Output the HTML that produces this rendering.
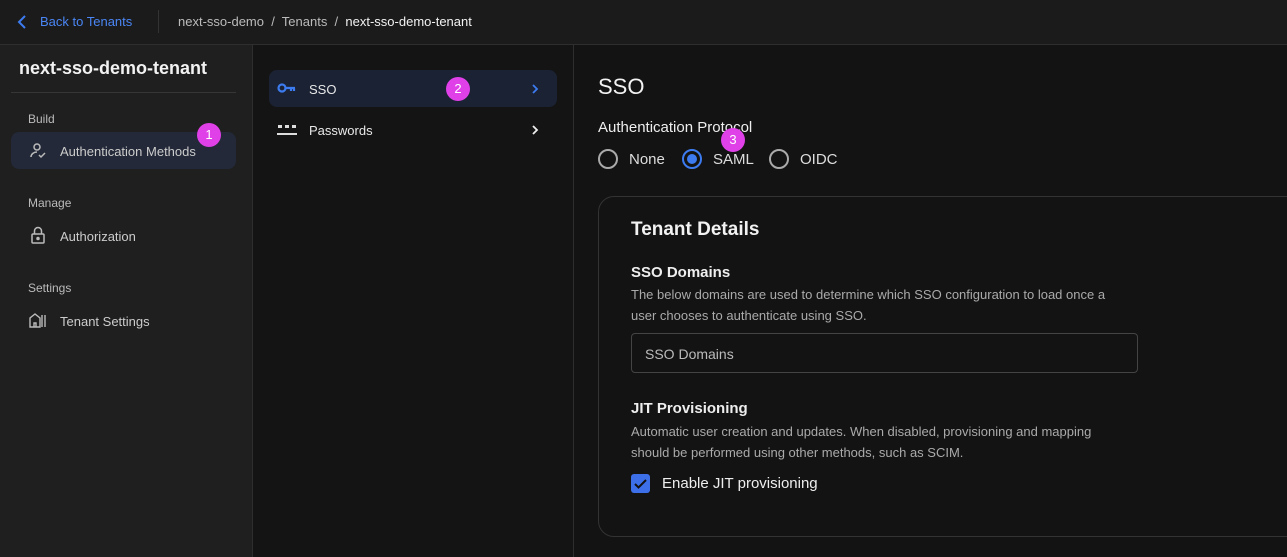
<!DOCTYPE html>
<html><head><style>
*{box-sizing:border-box;margin:0;padding:0}
body{width:1287px;height:557px;overflow:hidden;background:#131313;font-family:"Liberation Sans",sans-serif;color:#e8e8e8;position:relative}
.abs{position:absolute}
.top{left:0;top:0;width:1287px;height:45px;background:#1b1b1b;border-bottom:1px solid #2e2e2e}
.side{left:0;top:45px;width:253px;height:512px;background:#1f1f1f;border-right:1px solid #2e2e2e}
.mid{left:253px;top:45px;width:321px;height:512px;background:#141414;border-right:1px solid #2e2e2e}
.t{position:absolute;white-space:nowrap}
.badge{position:absolute;width:24px;height:24px;border-radius:50%;background:#e040e8;color:#fff;font-size:13px;text-align:center;line-height:24px}
.radio{position:absolute;width:20px;height:20px;border-radius:50%;border:2px solid #aaa}
</style></head><body>
<div class="abs top"></div>
<svg class="abs" style="left:16px;top:14px" width="12" height="16" viewBox="0 0 12 16"><path d="M9 2L3 8l6 6" stroke="#3d7cf0" stroke-width="2" fill="none"/></svg>
<div class="t" style="left:40px;top:14px;font-size:13px;color:#4a86f5">Back to Tenants</div>
<div class="abs" style="left:158px;top:10px;width:1px;height:23px;background:#333"></div>
<div class="t" style="left:178px;top:14px;font-size:13px;color:#bbb">next-sso-demo &nbsp;/&nbsp; Tenants &nbsp;/&nbsp; <span style="color:#f2f2f2">next-sso-demo-tenant</span></div>

<div class="abs side"></div>
<div class="t" style="left:19px;top:58px;font-size:18px;font-weight:bold;color:#f2f2f2">next-sso-demo-tenant</div>
<div class="abs" style="left:11px;top:92px;width:225px;height:1px;background:#363636"></div>
<div class="t" style="left:28px;top:112px;font-size:12px;color:#bbb">Build</div>
<div class="abs" style="left:11px;top:132px;width:225px;height:37px;border-radius:8px;background:#232938"></div>
<svg class="abs" style="left:29px;top:142px" width="18" height="18" viewBox="0 0 18 18" fill="none" stroke="#bbb" stroke-width="1.5"><circle cx="8" cy="5" r="3"/><path d="M2 15c0-3 3-5 6-5M10 13l2 2 4-4"/></svg>
<div class="t" style="left:60px;top:144px;font-size:13px;color:#ccc">Authentication Methods</div>
<div class="badge" style="left:197px;top:123px">1</div>
<div class="t" style="left:28px;top:196px;font-size:12px;color:#bbb">Manage</div>
<svg class="abs" style="left:30px;top:226px" width="16" height="18" viewBox="0 0 16 18" fill="none" stroke="#bbb" stroke-width="1.5"><rect x="2" y="8" width="12" height="9" rx="1"/><path d="M4.5 8V5a3.5 3.5 0 017 0v3"/><circle cx="8" cy="12.5" r="1" fill="#bbb"/></svg>
<div class="t" style="left:60px;top:229px;font-size:13px;color:#ccc">Authorization</div>
<div class="t" style="left:28px;top:281px;font-size:12px;color:#bbb">Settings</div>
<svg class="abs" style="left:29px;top:312px" width="18" height="16" viewBox="0 0 18 16" fill="none" stroke="#bbb" stroke-width="1.4"><path d="M1 15V6l5-4 5 4v9z"/><path d="M5 15v-4h2v4M13 3v12M16 3v12"/></svg>
<div class="t" style="left:60px;top:314px;font-size:13px;color:#ccc">Tenant Settings</div>

<div class="abs mid"></div>
<div class="abs" style="left:269px;top:70px;width:288px;height:37px;border-radius:8px;background:#1a2234"></div>
<svg class="abs" style="left:277px;top:83px" width="20" height="10" viewBox="0 0 20 10"><circle cx="5" cy="5" r="3.5" stroke="#3d7cf0" stroke-width="2.2" fill="none"/><path d="M8 5h10M14 5v3M17 5v3" stroke="#3d7cf0" stroke-width="2.2"/></svg>
<div class="t" style="left:309px;top:82px;font-size:13px;color:#e8e8e8">SSO</div>
<div class="badge" style="left:446px;top:77px">2</div>
<svg class="abs" style="left:530px;top:83px" width="10" height="12" viewBox="0 0 10 12"><path d="M3 2l4 4-4 4" stroke="#3d7cf0" stroke-width="1.8" fill="none"/></svg>
<svg class="abs" style="left:277px;top:124px" width="20" height="12" viewBox="0 0 20 12" fill="#ddd"><rect x="1" y="1" width="4" height="3"/><rect x="8" y="1" width="4" height="3"/><rect x="15" y="1" width="4" height="3"/><rect x="0" y="9" width="20" height="2"/></svg>
<div class="t" style="left:309px;top:123px;font-size:13px;color:#e8e8e8">Passwords</div>
<svg class="abs" style="left:530px;top:124px" width="10" height="12" viewBox="0 0 10 12"><path d="M3 2l4 4-4 4" stroke="#eee" stroke-width="1.8" fill="none"/></svg>

<div class="t" style="left:598px;top:74px;font-size:22px;color:#f2f2f2">SSO</div>
<div class="t" style="left:598px;top:119px;font-size:15px;color:#eee">Authentication Protocol</div>
<div class="badge" style="left:721px;top:128px">3</div>
<div class="radio" style="left:598px;top:149px"></div>
<div class="t" style="left:629px;top:151px;font-size:15px;color:#ddd">None</div>
<div class="radio" style="left:682px;top:149px;border-color:#3d7cf0"><div style="position:absolute;left:3px;top:3px;width:10px;height:10px;border-radius:50%;background:#3d7cf0"></div></div>
<div class="t" style="left:713px;top:151px;font-size:15px;color:#ddd">SAML</div>
<div class="radio" style="left:769px;top:149px"></div>
<div class="t" style="left:800px;top:151px;font-size:15px;color:#ddd">OIDC</div>

<div class="abs" style="left:598px;top:196px;width:720px;height:341px;border:1px solid #333;border-radius:16px"></div>
<div class="t" style="left:631px;top:219px;font-size:19px;font-weight:bold;color:#f2f2f2">Tenant Details</div>
<div class="t" style="left:631px;top:264px;font-size:15px;font-weight:bold;color:#eee">SSO Domains</div>
<div class="t" style="left:631px;top:284px;font-size:13px;color:#aaa;line-height:21px">The below domains are used to determine which SSO configuration to load once a<br>user chooses to authenticate using SSO.</div>
<div class="abs" style="left:631px;top:333px;width:507px;height:40px;border:1px solid #444;border-radius:4px"></div>
<div class="t" style="left:645px;top:346px;font-size:14px;color:#bbb">SSO Domains</div>
<div class="t" style="left:631px;top:400px;font-size:15px;font-weight:bold;color:#eee">JIT Provisioning</div>
<div class="t" style="left:631px;top:421px;font-size:13px;color:#aaa;line-height:21px">Automatic user creation and updates. When disabled, provisioning and mapping<br>should be performed using other methods, such as SCIM.</div>
<div class="abs" style="left:631px;top:474px;width:19px;height:19px;border-radius:3px;background:#3d6fe8"></div>
<svg class="abs" style="left:631px;top:474px" width="19" height="19" viewBox="0 0 19 19"><path d="M4 10l3.5 3.5L15 6" stroke="#111" stroke-width="2" fill="none"/></svg>
<div class="t" style="left:662px;top:475px;font-size:15px;color:#eee">Enable JIT provisioning</div>
</body></html>
